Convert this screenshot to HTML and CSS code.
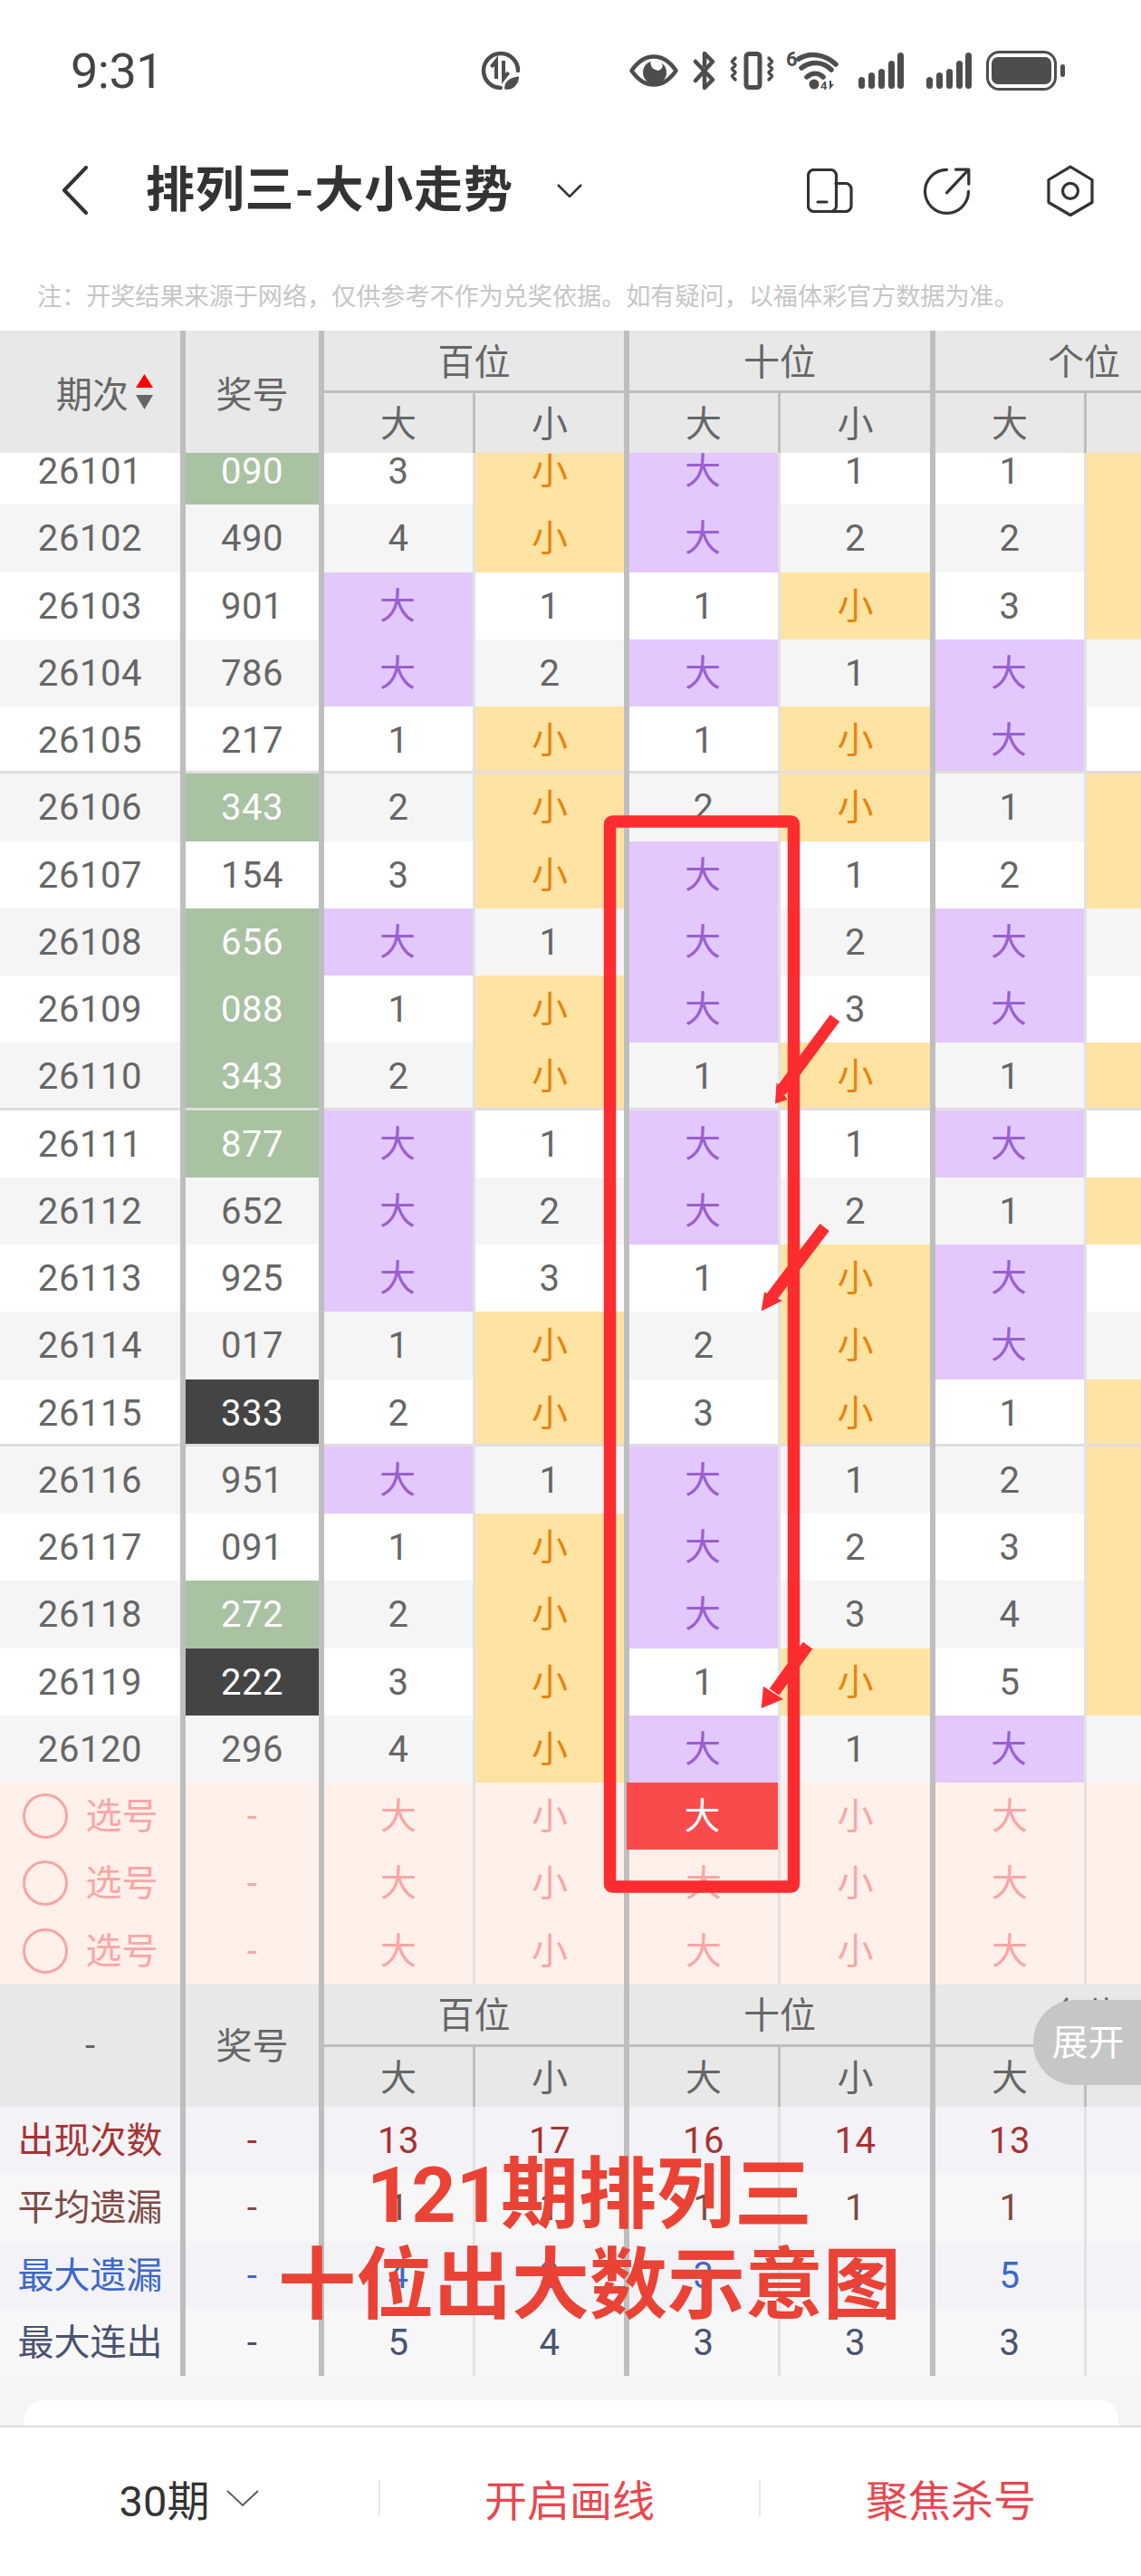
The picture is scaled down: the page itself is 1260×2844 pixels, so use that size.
FILE: index.html
```html
<!DOCTYPE html>
<html lang="zh-CN">
<head>
<meta charset="utf-8">
<title>排列三-大小走势</title>
<link rel="stylesheet" href="styles.css">
</head>
<body>
<div class="page">
  <header class="status">
    <span class="time">9:31</span>
    <svg class="st-data" width="44" height="44" viewBox="0 0 44 44"><path class="st-line" d="M22 41A19 19 0 1 1 41 22" stroke-width="4.500"/><path class="st-thin" d="M17 31V11L11.500 18M25 11V31L30.500 24"/><path class="st-fill st-halo" d="M25 43.500C24 33 31 28 43.500 27 43.500 37 37 45 28 44Z"/></svg>
    <svg class="st-eye" width="54" height="36" viewBox="0 0 54 36"><path class="st-line" d="M2.500 18C10 7 18 2.500 27 2.500S44 7 51.500 18C44 29 36 33.500 27 33.500S10 29 2.500 18Z" stroke-width="4.500"/><circle class="st-fill" cx="28" cy="20" r="13"/><path class="st-cut" d="M24 6a8 8 0 0 0 5 11 5 5 0 0 0 5-9z"/></svg>
    <svg class="st-bt" width="25" height="42" viewBox="0 0 25 42"><path class="st-line" d="M3 11 22 31 13 40V26M13 15V2L22 11 3 32" stroke-width="4.500"/></svg>
    <svg class="st-vib" width="49" height="42" viewBox="0 0 49 42"><rect class="st-line" x="18" y="2.500" width="15" height="37" rx="3" stroke-width="5"/><path class="st-line" d="M6 7 2.500 11 6 15 2.500 19 6 23 2.500 27 6 31M43 7 46.500 11 43 15 46.500 19 43 23 46.500 27 43 31" stroke-width="3.500"/></svg>
    <svg class="st-wifi" width="58" height="44" viewBox="0 0 58 44"><text class="st-six" x="0" y="17">6</text><path class="st-line" d="M14 9C26 2 42 3 55 15M17 19C28 11 41 12 50 21M23 29C29 24 36 24 41 29" stroke-width="5.500"/><circle class="st-fill" cx="31" cy="37" r="5.500"/><text class="st-four" x="38" y="43">4</text><path class="st-fill" d="M48 33h2v4h3l-5 6z"/></svg>
    <svg class="st-sig" width="50" height="40" viewBox="0 0 50 40"><rect class="st-fill" x="0" y="27" width="7" height="13" rx="3.500"/><rect class="st-fill" x="11" y="22" width="7" height="18" rx="3.500"/><rect class="st-fill" x="22" y="18" width="7" height="22" rx="3.500"/><rect class="st-fill" x="33" y="9" width="7" height="31" rx="3.500"/><rect class="st-fill" x="43" y="0" width="7" height="40" rx="3.500"/></svg>
    <svg class="st-sig st-sig2" width="50" height="40" viewBox="0 0 50 40"><rect class="st-fill" x="0" y="27" width="7" height="13" rx="3.500"/><rect class="st-fill" x="11" y="22" width="7" height="18" rx="3.500"/><rect class="st-fill" x="22" y="18" width="7" height="22" rx="3.500"/><rect class="st-fill" x="33" y="9" width="7" height="31" rx="3.500"/><rect class="st-fill" x="43" y="0" width="7" height="40" rx="3.500"/></svg>
    <svg class="st-bat" width="88" height="44" viewBox="0 0 88 44"><rect class="st-line" x="1.500" y="1.500" width="75" height="41" rx="13" stroke-width="3"/><rect class="st-fill" x="6" y="7" width="66" height="30" rx="7"/><rect class="st-fill" x="82" y="15" width="5" height="14" rx="2.500"/></svg>
  </header>

  <nav class="nav">
    <svg class="nav-back" width="30" height="54" viewBox="0 0 30 54"><path d="M27 2 3 27 27 52"/></svg>
    <h1 class="nav-title">排列三-大小走势</h1>
    <svg class="nav-caret" width="28" height="15" viewBox="0 0 28 15"><path d="M1 1 14 14 27 1"/></svg>
    <svg class="nav-ico nav-device" width="51" height="49" viewBox="0 0 51 49"><rect x="1.500" y="1.500" width="31" height="46" rx="6"/><path d="M32 16.500H43a6 6 0 0 1 6 6V41.500a6 6 0 0 1-6 6H27M12 37H22"/></svg>
    <svg class="nav-ico nav-share" width="53" height="53" viewBox="0 0 53 53"><path d="M26.500 3.300A24 24 0 1 0 50.500 27.300M26.500 28.800 49.800 4.200M36.500 3.200H50.800V19.200"/></svg>
    <svg class="nav-ico nav-hex" width="52" height="57" viewBox="0 0 52 57"><path d="M26 2.200 50 16.500V41.500L26 55.500 2 41.500V16.500Z"/><circle cx="26" cy="28.800" r="8.500"/></svg>
  </nav>

  <p class="note">注：开奖结果来源于网络，仅供参考不作为兑奖依据。如有疑问，以福体彩官方数据为准。</p>

  <section class="chart">
    <div class="head">
      <div class="head-id"><span>期次</span><svg width="19" height="39" viewBox="0 0 19 39"><path class="up" d="M9.500 0 19 15H0Z"/><path class="down" d="M0 23H19L9.500 39Z"/></svg></div>
      <div class="head-num">奖号</div>
      <div class="head-group">百位</div><div class="head-group">十位</div><div class="head-group">个位</div>
      <div class="head-sub">大</div><div class="head-sub">小</div><div class="head-sub">大</div><div class="head-sub">小</div><div class="head-sub">大</div><div class="head-sub">小</div>
    </div>

    <div class="scroller">
      <div class="rows">
        <div class="row"><div>26101</div><div class="n2">090</div><div>3</div><div class="s">小</div><div class="b">大</div><div>1</div><div>1</div><div class="s">小</div></div>
        <div class="row"><div>26102</div><div>490</div><div>4</div><div class="s">小</div><div class="b">大</div><div>2</div><div>2</div><div class="s">小</div></div>
        <div class="row"><div>26103</div><div>901</div><div class="b">大</div><div>1</div><div>1</div><div class="s">小</div><div>3</div><div class="s">小</div></div>
        <div class="row"><div>26104</div><div>786</div><div class="b">大</div><div>2</div><div class="b">大</div><div>1</div><div class="b">大</div><div>1</div></div>
        <div class="row"><div>26105</div><div>217</div><div>1</div><div class="s">小</div><div>1</div><div class="s">小</div><div class="b">大</div><div>2</div></div>
        <div class="row"><div>26106</div><div class="n2">343</div><div>2</div><div class="s">小</div><div>2</div><div class="s">小</div><div>1</div><div class="s">小</div></div>
        <div class="row"><div>26107</div><div>154</div><div>3</div><div class="s">小</div><div class="b">大</div><div>1</div><div>2</div><div class="s">小</div></div>
        <div class="row"><div>26108</div><div class="n2">656</div><div class="b">大</div><div>1</div><div class="b">大</div><div>2</div><div class="b">大</div><div>1</div></div>
        <div class="row"><div>26109</div><div class="n2">088</div><div>1</div><div class="s">小</div><div class="b">大</div><div>3</div><div class="b">大</div><div>2</div></div>
        <div class="row"><div>26110</div><div class="n2">343</div><div>2</div><div class="s">小</div><div>1</div><div class="s">小</div><div>1</div><div class="s">小</div></div>
        <div class="row"><div>26111</div><div class="n2">877</div><div class="b">大</div><div>1</div><div class="b">大</div><div>1</div><div class="b">大</div><div>1</div></div>
        <div class="row"><div>26112</div><div>652</div><div class="b">大</div><div>2</div><div class="b">大</div><div>2</div><div>1</div><div class="s">小</div></div>
        <div class="row"><div>26113</div><div>925</div><div class="b">大</div><div>3</div><div>1</div><div class="s">小</div><div class="b">大</div><div>1</div></div>
        <div class="row"><div>26114</div><div>017</div><div>1</div><div class="s">小</div><div>2</div><div class="s">小</div><div class="b">大</div><div>2</div></div>
        <div class="row"><div>26115</div><div class="n3">333</div><div>2</div><div class="s">小</div><div>3</div><div class="s">小</div><div>1</div><div class="s">小</div></div>
        <div class="row"><div>26116</div><div>951</div><div class="b">大</div><div>1</div><div class="b">大</div><div>1</div><div>2</div><div class="s">小</div></div>
        <div class="row"><div>26117</div><div>091</div><div>1</div><div class="s">小</div><div class="b">大</div><div>2</div><div>3</div><div class="s">小</div></div>
        <div class="row"><div>26118</div><div class="n2">272</div><div>2</div><div class="s">小</div><div class="b">大</div><div>3</div><div>4</div><div class="s">小</div></div>
        <div class="row"><div>26119</div><div class="n3">222</div><div>3</div><div class="s">小</div><div>1</div><div class="s">小</div><div>5</div><div class="s">小</div></div>
        <div class="row"><div>26120</div><div>296</div><div>4</div><div class="s">小</div><div class="b">大</div><div>1</div><div class="b">大</div><div>1</div></div>
        <div class="row pick"><div class="lbl"><span class="radio"></span>选号</div><div>-</div><div class="g">大</div><div class="g">小</div><div class="g on">大</div><div class="g">小</div><div class="g">大</div><div class="g">小</div></div>
        <div class="row pick"><div class="lbl"><span class="radio"></span>选号</div><div>-</div><div class="g">大</div><div class="g">小</div><div class="g">大</div><div class="g">小</div><div class="g">大</div><div class="g">小</div></div>
        <div class="row pick"><div class="lbl"><span class="radio"></span>选号</div><div>-</div><div class="g">大</div><div class="g">小</div><div class="g">大</div><div class="g">小</div><div class="g">大</div><div class="g">小</div></div>
      </div>
    </div>

    <div class="head head-foot">
      <div class="head-id head-dash">-</div>
      <div class="head-num">奖号</div>
      <div class="head-group">百位</div><div class="head-group">十位</div><div class="head-group">个位</div>
      <div class="head-sub">大</div><div class="head-sub">小</div><div class="head-sub">大</div><div class="head-sub">小</div><div class="head-sub">大</div><div class="head-sub">小</div>
    </div>

    <div class="stats">
      <div class="row stat stat-count"><div class="lbl">出现次数</div><div>-</div><div>13</div><div>17</div><div>16</div><div>14</div><div>13</div><div>17</div></div>
      <div class="row stat stat-avg"><div class="lbl">平均遗漏</div><div>-</div><div>1</div><div>1</div><div>1</div><div>1</div><div>1</div><div>1</div></div>
      <div class="row stat stat-miss"><div class="lbl">最大遗漏</div><div>-</div><div>4</div><div>3</div><div>3</div><div>3</div><div>5</div><div>3</div></div>
      <div class="row stat stat-run"><div class="lbl">最大连出</div><div>-</div><div>5</div><div>4</div><div>3</div><div>3</div><div>3</div><div>5</div></div>
    </div>
  </section>

  <div class="below"><div class="card"></div></div>

  <footer class="foot">
    <div class="foot-item foot-period">30期<svg width="36" height="18" viewBox="0 0 36 18"><path d="M1 1 18 17 35 1"/></svg></div>
    <div class="foot-item foot-red">开启画线</div>
    <div class="foot-item foot-red">聚焦杀号</div>
  </footer>

  <button class="expand">展开</button>

  <svg class="marks" width="1260" height="2844" viewBox="0 0 1260 2844">
    <rect class="mark-box" x="673.500" y="907" width="203" height="1176" rx="3"/>
    <path class="mark-shaft" d="M922 1124 862 1205M910.600 1355 852 1432M892 1816.500 855 1868"/>
    <path class="mark-head" d="M856 1218.600 857.600 1195 869.400 1214ZM840.700 1447.500 844 1426.400 864 1436ZM840.700 1886 843 1861.700 865 1876Z"/>
  </svg>

  <div class="headline">121期排列三<br>十位出大数示意图</div>
</div>
</body>
</html>
```
FILE: styles.css
```css
* { box-sizing: border-box; }
html, body { margin: 0; padding: 0; background: #fff; }
body { font-family: Roboto, "Noto Sans CJK SC", sans-serif; }
.page { position: relative; width: 1260px; height: 2844px; overflow: hidden; display: flex; flex-direction: column; }

/* status bar */
.status { height: 156px; flex: none; display: flex; align-items: center; padding-left: 78px; }
.time { width: 453px; font-size: 54px; color: #444; letter-spacing: -0.5px; }
.st-line { fill: none; stroke: #4d4d4d; stroke-linecap: round; stroke-linejoin: round; }
.st-thin { fill: none; stroke: #4d4d4d; stroke-width: 4; }
.st-fill { fill: #4d4d4d; }
.st-halo { stroke: #fff; stroke-width: 2.500; }
.st-cut { fill: #fff; }
.st-six { font: 700 22px Roboto, sans-serif; fill: #4d4d4d; }
.st-four { font: 700 13px Roboto, sans-serif; fill: #4d4d4d; }
.st-eye { margin-left: 120px; }
.st-bt { margin-left: 16px; }
.st-vib { margin-left: 16px; }
.st-wifi { margin-left: 13px; }
.st-sig { margin-left: 22px; }
.st-sig2 { margin-left: 25px; }
.st-bat { margin-left: 16px; }

/* nav */
.nav { height: 108px; flex: none; display: flex; align-items: center; padding-left: 68px; padding-right: 52px; }
.nav-back path { fill: none; stroke: #333; stroke-width: 4; stroke-linecap: round; stroke-linejoin: round; }
.nav-title { margin: 0 0 0 63px; font-size: 54px; font-weight: 700; color: #333; line-height: 1; letter-spacing: 0.8px; padding-top: 2px; }
.nav-caret { margin-left: 48px; }
.nav-caret path { fill: none; stroke: #333; stroke-width: 2.500; }
.nav-ico path, .nav-ico rect, .nav-ico circle { fill: none; stroke: #333; stroke-width: 3.200; stroke-linecap: round; stroke-linejoin: round; }
.nav-device { margin-left: auto; }
.nav-share { margin-left: 77px; }
.nav-hex { margin-left: 84px; }

/* note */
.note { flex: none; height: 101px; margin: 0; padding: 21px 0 0 41px; display: flex; align-items: center; font-size: 27.100px; color: #c6c6c6; white-space: nowrap; }

/* chart */
.chart { flex: none; font-size: 40px; color: #666; }
.head, .row { display: grid; grid-template-columns: 205px 153px 167px 170px 167px 171px 167px 167px; width: 1367px; }
.head { grid-template-rows: 69px 66px; background: #e8e8e8; }
.head-foot { grid-template-rows: 69.250px 66px; }
.head-id, .head-num { grid-row: span 2; display: flex; align-items: center; border-right: 6px solid #bebebe; }
.head-id { padding-left: 62px; gap: 8px; }
.head-id .up { fill: #f00; }
.head-id .down { fill: #666; }
.head-dash { padding-left: 0; justify-content: center; }
.head-num { justify-content: center; }
.head-foot .head-num { padding-bottom: 4px; }
.head-group { grid-column: span 2; display: flex; align-items: center; justify-content: center; padding-bottom: 3px; border-bottom: 3px solid #bebebe; border-right: 6px solid #bebebe; }
.head-sub { display: flex; align-items: center; justify-content: center; padding-bottom: 5px; border-right: 3px solid #bebebe; }
.head-sub:nth-child(odd) { border-right-width: 6px; }

.scroller { height: 1690.750px; overflow: hidden; }
.rows { margin-top: -17px; }
.row { height: 74.250px; background: #fff; letter-spacing: 0.6px; }
.rows .row:nth-child(even) { background: #f5f5f5; }
.row > div { display: flex; align-items: center; justify-content: center; padding-top: 1px; border-right: 3px solid #e2e2e2; }
.row > div:nth-child(1), .row > div:nth-child(2), .row > div:nth-child(4), .row > div:nth-child(6), .row > div:nth-child(8) { border-right: 6px solid #bebebe; }
.rows .row:nth-child(5n):not(:nth-child(20)) > div { box-shadow: inset 0 -3px #dedede; }
.row > .b, .row > .s, .row > .g, .row > .lbl { padding-top: 0; padding-bottom: 6px; letter-spacing: 0; }
.row > .b { background: #e2c8fd; color: #9a5fd0; padding-right: 2px; }
.row > .s { background: #ffe3a3; color: #e8830f; }
.row > .n2 { background: #a8c2a2; color: #fff; }
.row > .n3 { background: #444; color: #fff; }

.rows .row.pick { background: #fff0ea; color: #f9a6a6; }
.row.pick > div { border-right-color: #e6e0dc; }
.row.pick > div:nth-child(1), .row.pick > div:nth-child(2), .row.pick > div:nth-child(4), .row.pick > div:nth-child(6), .row.pick > div:nth-child(8) { border-right-color: #bebebe; }
.radio { width: 50px; height: 50px; margin: 6px 20px 0 0; border: 3px solid #f8a5a5; border-radius: 50%; flex: none; }
.row.pick > .on { margin-left: -3px; background: #fa4a4c; color: #fff; z-index: 1; }

.stat:nth-child(odd) { background: #f2f2f7; }
.stat:nth-child(even) { background: #f7f7f7; }
.stat-count { color: #a83232; }
.stat-avg { color: #7d4a44; }
.stat-miss { color: #3e68c8; }
.stat-run { color: #4a5270; }

/* below the chart */
.below { flex: none; height: 54.500px; padding: 27px 25px 0 27px; background: #f5f5f7; overflow: hidden; }
.card { height: 100px; background: #fff; border-radius: 20px; }

/* footer */
.foot { flex: 1; display: flex; align-items: center; background: #fff; border-top: 2px solid #ddd; padding-bottom: 8px; }
.foot-item { width: 422px; height: 40px; display: flex; align-items: center; justify-content: center; font-size: 47px; border-right: 2px solid #e8e8e8; }
.foot-item:last-child { border-right: 0; }
.foot-period { color: #333; gap: 19px; }
.foot-period path { fill: none; stroke: #555; stroke-width: 1.800; }
.foot-red { color: #e8474f; }

/* overlays */
.expand { position: absolute; right: 0; top: 2208px; width: 119px; height: 94px; padding: 0 0 6px 2px; border: 0; border-radius: 46px 0 0 46px; background: #c6c6c6; color: #fff; font: 40px Roboto, "Noto Sans CJK SC", sans-serif; text-align: center; }
.marks { position: absolute; left: 0; top: 0; pointer-events: none; }
.mark-box { fill: none; stroke: #fd2c31; stroke-width: 13.500; stroke-linejoin: round; }
.mark-shaft { fill: none; stroke: #fd2c31; stroke-width: 13; }
.mark-head { fill: #fd2c31; }
.headline { position: absolute; left: 251px; top: 2374px; width: 800px; text-align: center; font-size: 86px; font-weight: 700; line-height: 100px; color: #ea4335; }
```
